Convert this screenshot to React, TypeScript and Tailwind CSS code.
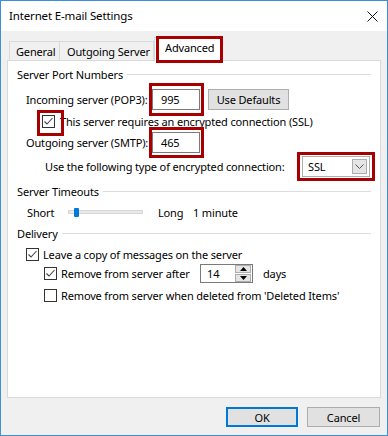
import { ReactNode } from 'react'

function Mark({ className }: { className: string }) {
  return (
    <span
      className={
        'pointer-events-none absolute border-[3px] border-[#a80000] ' +
        className
      }
    />
  )
}

function Check({ checked }: { checked?: boolean }) {
  return (
    <span className="flex h-[13px] w-[13px] shrink-0 items-center justify-center border border-[#333333] bg-white">
      {checked && (
        <svg width="11" height="11" viewBox="0 0 11 11">
          <path
            d="M1.5 5.5 L4 8 L9.5 2"
            fill="none"
            stroke="#444444"
            strokeWidth="1.1"
          />
        </svg>
      )}
    </span>
  )
}

function Group({ title, className }: { title: string; className?: string }) {
  return (
    <div className={'flex h-[16px] items-center pl-[9px] pr-[9px] ' + (className ?? '')}>
      <span>{title}</span>
      <span className="ml-[4px] h-px flex-1 bg-[#dcdcdc]" />
    </div>
  )
}

function Field({ value, children }: { value: string; children?: ReactNode }) {
  return (
    <div className="relative flex h-[21px] w-[48px] items-center border border-[#7a7a7a] bg-white pl-[8px]">
      {value}
      {children}
    </div>
  )
}

export default function App() {
  return (
    <div className="flex h-[436px] w-[388px] flex-col whitespace-nowrap border border-[#3c8fdc] bg-[#f0f0f0] font-['Noto_Sans',sans-serif] text-[11px] leading-none tracking-[-0.15px] text-black">
      {/* title bar */}
      <div className="flex h-[30px] items-center justify-between bg-white pl-[8px] pr-[9px]">
        <span className="text-[11.5px]">Internet E-mail Settings</span>
        <svg width="11" height="11" viewBox="0 0 11 11">
          <path d="M0.5 0.5 L10.5 10.5 M10.5 0.5 L0.5 10.5" stroke="#111" strokeWidth="1" />
        </svg>
      </div>

      {/* tabs */}
      <div className="mt-[6px] flex h-[23px] items-end pl-[8px]">
        <div className="flex h-[19px] w-[51px] items-center border border-b-0 border-[#d9d9d9] pl-[6px]">
          General
        </div>
        <div className="flex h-[19px] w-[94px] items-center border border-b-0 border-l-0 border-[#d9d9d9] pl-[7px]">
          Outgoing Server
        </div>
        <div className="relative z-10 -mb-px flex h-[24px] w-[69px] items-center border border-b-0 border-[#d9d9d9] bg-white pb-[4px] pl-[10px]">
          Advanced
          <Mark className="-bottom-[2px] -right-[1px] -top-[2px] left-[1px]" />
        </div>
      </div>

      {/* panel */}
      <div className="mx-[6px] flex h-[338px] flex-col border border-[#d9d9d9] bg-white">
        <Group title="Server Port Numbers" className="mt-[5px]" />

        <div className="mt-[6px] flex h-[22px] items-center pl-[18px]">
          <span className="w-[126px]">Incoming server (POP3):</span>
          <div className="relative">
            <Field value="995" />
            <Mark className="-bottom-[6px] -left-[3px] -right-[4px] -top-[6px]" />
          </div>
          <button className="ml-[8px] h-[21px] w-[81px] border border-[#adadad] bg-[#e1e1e1]">
            Use Defaults
          </button>
        </div>

        <div className="mt-[2px] flex h-[18px] items-center pl-[34px]">
          <div className="relative">
            <Check checked />
            <Mark className="-bottom-[8px] -left-[5px] -right-[9px] -top-[5px]" />
          </div>
          <span className="ml-[5px]">This server requires an encrypted connection (SSL)</span>
        </div>

        <div className="mt-px flex h-[22px] items-center pl-[18px]">
          <span className="w-[126px]">Outgoing server (SMTP):</span>
          <div className="relative">
            <Field value="465" />
            <Mark className="-bottom-[5px] -left-[3px] -right-[4px] -top-[5px]" />
          </div>
        </div>

        <div className="mt-[2px] flex h-[22px] items-center pl-[37px]">
          <span className="w-[257px]">Use the following type of encrypted connection:</span>
          <div className="relative flex h-[21px] w-[68px] items-center justify-between border border-[#adadad] bg-white pl-[5px] pr-[2px]">
            SSL
            <span className="flex h-[15px] w-[15px] items-center justify-center border border-[#adadad] bg-[#e5e5e5]">
              <svg width="9" height="5" viewBox="0 0 9 5">
                <path d="M0.5 0.5 L4.5 4.5 L8.5 0.5" fill="none" stroke="#555" strokeWidth="1" />
              </svg>
            </span>
            <Mark className="-bottom-[5px] -left-[6px] -right-[6px] -top-[5px]" />
          </div>
        </div>

        <Group title="Server Timeouts" className="mt-[6px]" />

        <div className="mt-[4px] flex h-[18px] items-center pl-[19px]">
          <span className="w-[41px]">Short</span>
          <div className="relative h-[4px] w-[75px] border border-[#d6d6d6] bg-[#e7eaea]">
            <span className="absolute -top-[3px] left-[5px] h-[9px] w-[5px] rounded-[1px] bg-[#007ad9]" />
          </div>
          <span className="ml-[15px] w-[35px]">Long</span>
          <span>1 minute</span>
        </div>

        <Group title="Delivery" className="mt-[4px]" />

        <div className="mt-[4px] flex h-[18px] items-center pl-[18px]">
          <Check checked />
          <span className="ml-[4px]">Leave a copy of messages on the server</span>
        </div>

        <div className="flex h-[20px] items-center pl-[36px]">
          <Check checked />
          <span className="ml-[4px] w-[139px]">Remove from server after</span>
          <div className="flex h-[19px] w-[53px] items-center justify-between border border-[#7a7a7a] bg-white pl-[6px] pr-px">
            14
            <span className="flex h-[17px] w-[16px] flex-col">
              <span className="flex h-[8px] items-center justify-center border border-[#adadad] bg-[#e5e5e5]">
                <svg width="7" height="4" viewBox="0 0 7 4">
                  <path d="M0 4 L3.5 0 L7 4 Z" fill="#000" />
                </svg>
              </span>
              <span className="mt-px flex h-[8px] items-center justify-center border border-[#adadad] bg-[#e5e5e5]">
                <svg width="7" height="4" viewBox="0 0 7 4">
                  <path d="M0 0 L3.5 4 L7 0 Z" fill="#000" />
                </svg>
              </span>
            </span>
          </div>
          <span className="ml-[10px]">days</span>
        </div>

        <div className="mt-[3px] flex h-[18px] items-center pl-[36px]">
          <Check />
          <span className="ml-[4px]">Remove from server when deleted from 'Deleted Items'</span>
        </div>
      </div>

      {/* buttons */}
      <div className="mr-[7px] mt-[9px] flex justify-end gap-[9px]">
        <button className="h-[20px] w-[72px] border-2 border-[#0078d7] bg-[#e1e1e1]">OK</button>
        <button className="h-[20px] w-[73px] border border-[#adadad] bg-[#e1e1e1]">Cancel</button>
      </div>
    </div>
  )
}
